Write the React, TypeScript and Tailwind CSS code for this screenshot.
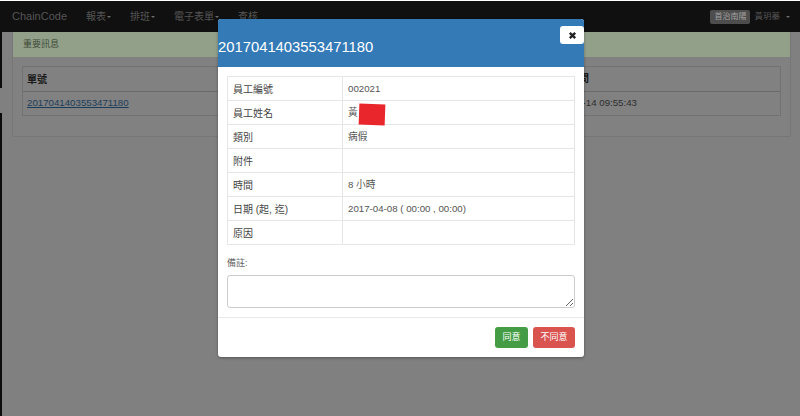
const font = "font-['Liberation_Sans','Noto_Sans_CJK_TC',sans-serif]";

const rows: [string, React.ReactNode][] = [
  ['員工編號', '002021'],
  ['員工姓名', <span className="relative inline-block">黃<span className="absolute left-[11px] top-[-2px] h-[21px] w-[26px] bg-[#e8262c] rotate-[2deg]" /></span>],
  ['類別', '病假'],
  ['附件', ''],
  ['時間', '8 小時'],
  ['日期 (起, 迄)', '2017-04-08 ( 00:00 , 00:00)'],
  ['原因', ''],
];

function NavItem({ label, caret = true }: { label: string; caret?: boolean }) {
  return (
    <span className="flex items-center gap-[1px] text-[10px] text-[#545454]">
      {label}
      {caret && <span className="h-0 w-0 border-x-[2px] border-t-[2px] border-x-transparent border-t-[#6a6a6a]" />}
    </span>
  );
}

function Modal() {
  return (
    <div className="absolute left-[218px] top-[19px] w-[366px] h-[338px] rounded-[3px] bg-white shadow-[0_1px_3px_rgba(0,0,0,0.35)] flex flex-col">
      <div className="relative h-[48px] shrink-0 rounded-t-[3px] bg-[#337ab7] pt-[18px] text-[14.8px] leading-[20px] text-white">
        2017041403553471180
        <button className="absolute right-[0px] top-[7px] flex h-[18px] w-[24px] items-center justify-center rounded-[3px] bg-white">
          <svg width="9" height="9" viewBox="0 0 10 10">
            <path d="M2 2 L8 8 M8 2 L2 8" stroke="#222" strokeWidth="2.6" />
          </svg>
        </button>
      </div>
      <div className="flex-1 px-[9px] pt-[9px]">
        <table className="w-full border-collapse text-[9.7px] table-fixed">
          <tbody>
            {rows.map(([k, v]) => (
              <tr key={k} className="h-[24px]">
                <td className="w-[115px] border border-[#e4e6ea] pl-[5px] pt-[1px] text-[10px] text-[#444]">{k}</td>
                <td className="border border-[#e4e6ea] pl-[5px] pt-[1px] text-[#555]">{v}</td>
              </tr>
            ))}
          </tbody>
        </table>
        <div className="mt-[11px] text-[9px] leading-[14px] text-[#666]">備註:</div>
        <textarea className="mt-[5px] block h-[33px] w-full rounded-[3px] border border-[#ccc] bg-white" />
      </div>
      <div className="flex h-[40px] shrink-0 items-center justify-end gap-[5px] border-t border-[#e8e8e8] pr-[9px]">
        <button className="h-[21px] w-[33px] rounded-[3px] bg-[#449d44] text-[9px] text-white">同意</button>
        <button className="h-[21px] w-[42px] rounded-[3px] bg-[#d9534f] text-[9px] text-white">不同意</button>
      </div>
    </div>
  );
}

export default function App() {
  return (
    <div className={`relative h-[416px] w-[800px] overflow-hidden bg-[#808080] ${font}`}>
      <div className="h-[1px] bg-white" />
      <div className="flex h-[31px] items-center bg-[#101010] pl-[12px] pr-[10px]">
        <span className="mr-[19px] text-[11px] text-[#555]">ChainCode</span>
        <div className="flex gap-[19px]">
          <NavItem label="報表" />
          <NavItem label="排班" />
          <NavItem label="電子表單" />
          <NavItem label="查核" caret={false} />
        </div>
        <div className="ml-auto flex items-center gap-[3px]">
          <span className="rounded-[2px] bg-[#4d4d4d] px-[4px] py-[1px] text-[8px] text-[#a0a0a0]">首治南陽</span>
          <span className="ml-[1px] text-[8.5px] text-[#555]">黃玥蓁</span>
          <span className="ml-[3px] h-0 w-0 border-x-[2px] border-t-[2px] border-x-transparent border-t-[#6a6a6a]" />
        </div>
      </div>

      <div className="ml-[12px] w-[779px] h-[105px] rounded-b-[2px] border border-t-0 border-[#767676] bg-[#818181]">
        <div className="flex h-[25px] items-center bg-[#929f89] pl-[10px] text-[9px] text-[#3b4a36]">重要訊息</div>
        <div className="mx-[9px] mt-[9px] border border-[#727272] text-[9.7px]">
          <div className="grid h-[25px] grid-cols-[1fr_233px] items-center border-b border-[#6a6a6a] pl-[4px] font-bold text-[#1a1a1a]">
            <span className="text-[10px]">單號</span>
            <span className="text-[10.5px]">申請時間</span>
          </div>
          <div className="grid h-[23px] grid-cols-[1fr_233px] items-center pl-[4px] text-[#333]">
            <span className="underline text-[#1c3d5a]">2017041403553471180</span>
            <span className="text-[#2e2e2e]">2017-04-14 09:55:43</span>
          </div>
        </div>
      </div>
      <div className="absolute left-0 top-[32px] h-[56px] w-[2px] bg-[#0c0c0c]" />
      <div className="absolute left-0 top-[113px] bottom-0 w-[2px] bg-[#0c0c0c]" />
      <Modal />
    </div>
  );
}
